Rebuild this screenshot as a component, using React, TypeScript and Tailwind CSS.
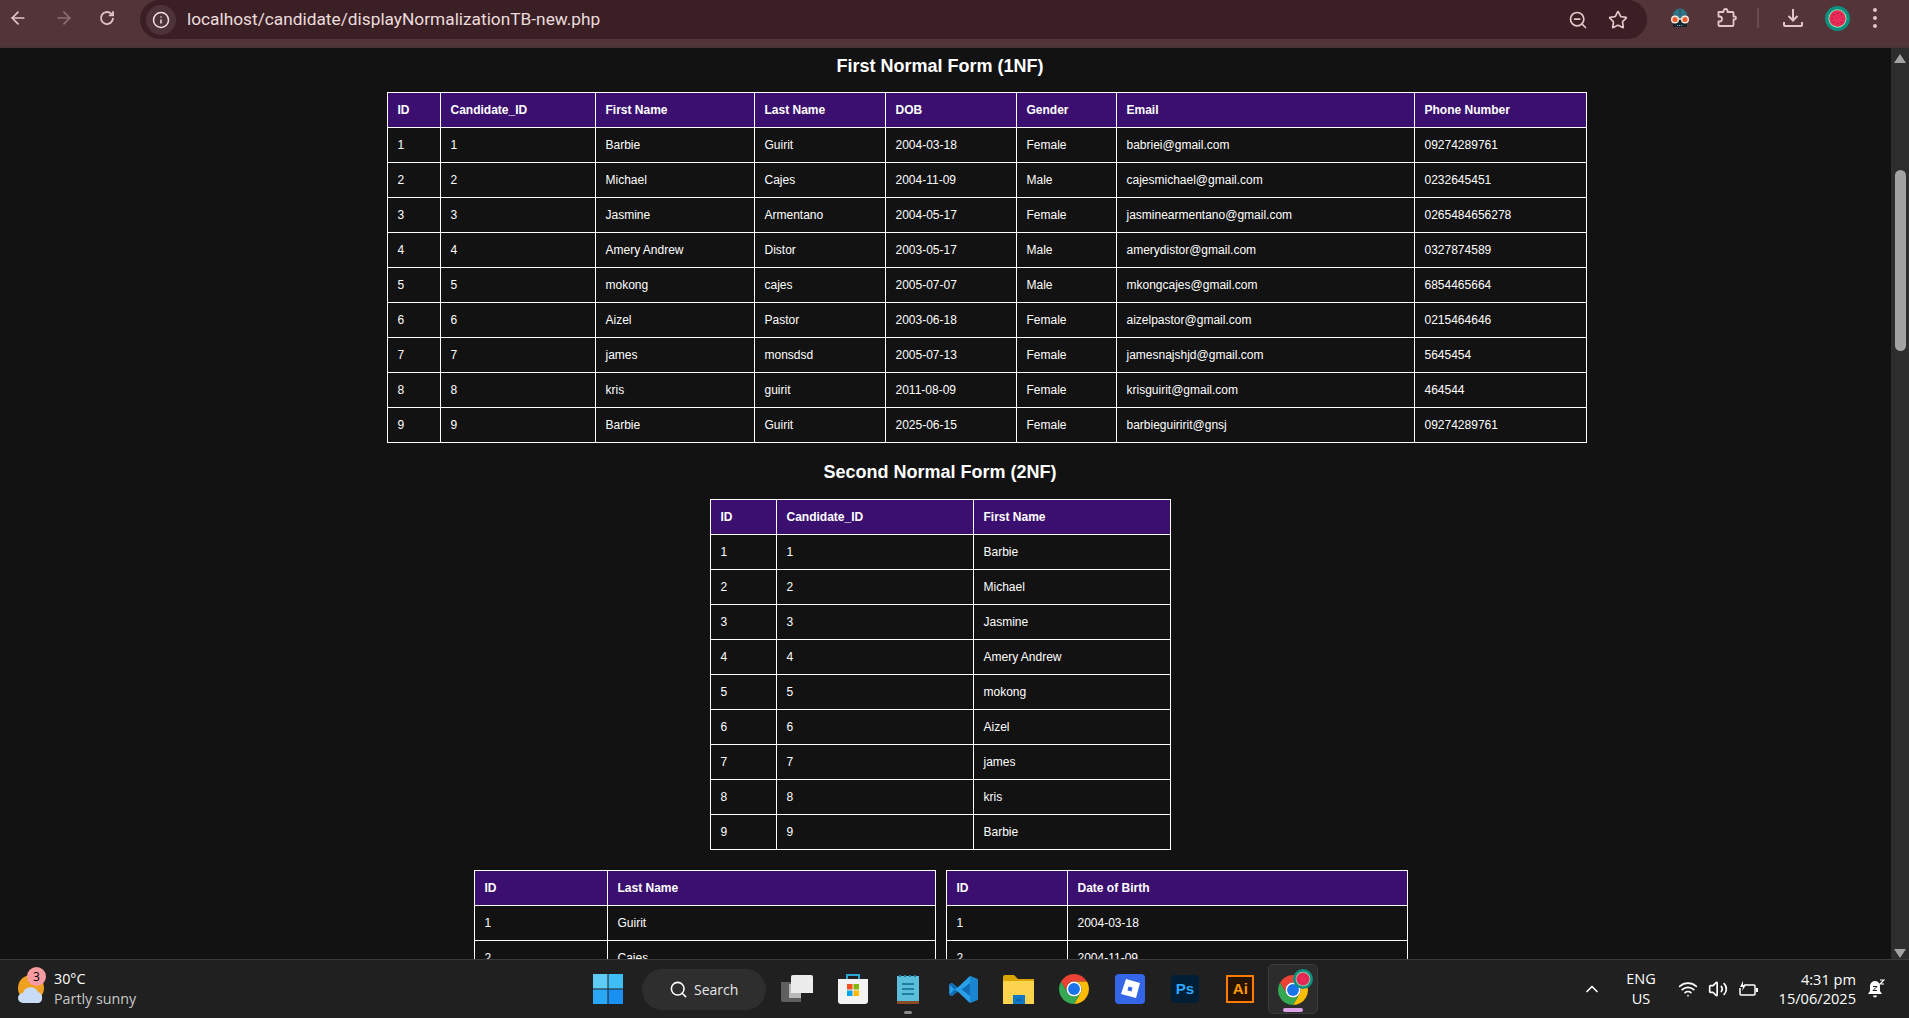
import { ArrowLeft, ArrowRight, ChevronUp, Info, Search, Star, Volume2, Wifi, ZoomOut } from "lucide-react";

type TableProps = {
  className: string;
  cols: string[];
  head: string[];
  rows: string[][];
};

const candidates = [
  ["1", "1", "Barbie", "Guirit", "2004-03-18", "Female", "babriei@gmail.com", "09274289761"],
  ["2", "2", "Michael", "Cajes", "2004-11-09", "Male", "cajesmichael@gmail.com", "0232645451"],
  ["3", "3", "Jasmine", "Armentano", "2004-05-17", "Female", "jasminearmentano@gmail.com", "0265484656278"],
  ["4", "4", "Amery Andrew", "Distor", "2003-05-17", "Male", "amerydistor@gmail.com", "0327874589"],
  ["5", "5", "mokong", "cajes", "2005-07-07", "Male", "mkongcajes@gmail.com", "6854465664"],
  ["6", "6", "Aizel", "Pastor", "2003-06-18", "Female", "aizelpastor@gmail.com", "0215464646"],
  ["7", "7", "james", "monsdsd", "2005-07-13", "Female", "jamesnajshjd@gmail.com", "5645454"],
  ["8", "8", "kris", "guirit", "2011-08-09", "Female", "krisguirit@gmail.com", "464544"],
  ["9", "9", "Barbie", "Guirit", "2025-06-15", "Female", "barbieguiririt@gnsj", "09274289761"],
];

const DataTable = ({ className, cols, head, rows }: TableProps) => (
  <table className={`table-fixed border-collapse text-xs text-white ${className}`}>
    <colgroup>
      {cols.map((col, i) => (
        <col key={i} className={col} />
      ))}
    </colgroup>
    <thead>
      <tr className="h-[35px] bg-[#3b0f70]">
        {head.map((label) => (
          <th key={label} className="border border-white px-[10px] text-left font-bold">
            {label}
          </th>
        ))}
      </tr>
    </thead>
    <tbody>
      {rows.map((row) => (
        <tr key={row[0]} className="h-[35px]">
          {row.map((cell, i) => (
            <td key={i} className="border border-white px-[10px]">
              {cell}
            </td>
          ))}
        </tr>
      ))}
    </tbody>
  </table>
);

const Chrome = ({ size }: { size: number }) => (
  <svg width={size} height={size} viewBox="0 0 48 48">
    <path fill="#ea4335" d="M24 12H44.78A24 24 0 0 0 3.22 12L13.6 30A12 12 0 0 1 24 12Z" />
    <path fill="#fbbc04" d="M24 12A12 12 0 0 1 34.4 30L24 48A24 24 0 0 0 44.78 12Z" />
    <path fill="#34a853" d="M34.4 30A12 12 0 0 1 13.6 30L3.22 12A24 24 0 0 0 24 48Z" />
    <circle cx="24" cy="24" r="12" fill="#fff" />
    <circle cx="24" cy="24" r="9.5" fill="#1a73e8" />
  </svg>
);

const Melon = ({ size }: { size: number }) => (
  <svg width={size} height={size} viewBox="0 0 26 26">
    <circle cx="13" cy="13" r="13" fill="#0b8f7e" />
    <circle cx="13" cy="13" r="9.5" fill="#8fe3b0" />
    <circle cx="13" cy="13" r="8.5" fill="#ea2a58" />
    <g fill="#7a1030">
      <circle cx="13" cy="7.5" r="0.6" />
      <circle cx="13" cy="18.5" r="0.6" />
      <circle cx="7.5" cy="13" r="0.6" />
      <circle cx="18.5" cy="13" r="0.6" />
      <circle cx="9" cy="9" r="0.6" />
      <circle cx="17" cy="9" r="0.6" />
      <circle cx="9" cy="17" r="0.6" />
      <circle cx="17" cy="17" r="0.6" />
    </g>
  </svg>
);

const Robot = () => (
  <svg width="20" height="20" viewBox="0 0 20 20">
    <path fill="#15242c" d="M3 9h14v10H3Z" />
    <path fill="#2f7386" d="M2.500 11C2.500 4 5.500 0.500 10 0.500S17.500 4 17.500 11Z" />
    <path stroke="#1d4f5e" strokeWidth="1" d="M10 1v6" />
    <circle cx="5" cy="11.500" r="3.300" fill="#ee5a2c" stroke="#f3ece4" strokeWidth="1.400" />
    <circle cx="15" cy="11.500" r="3.300" fill="#ee5a2c" stroke="#f3ece4" strokeWidth="1.400" />
    <path stroke="#f3ece4" strokeWidth="1.400" d="M8 11h4" />
    <path stroke="#6fc8d8" strokeWidth="1.200" strokeDasharray="1 1" d="M7 17.500h6" />
  </svg>
);

const TaskCell = ({ children }: { children: React.ReactNode }) => (
  <div className="relative flex h-[50px] w-[55.4px] shrink-0 items-center justify-center">{children}</div>
);

const Toolbar = () => (
  <div className="flex h-[48px] shrink-0 border-b-2 border-[#4b3439] bg-[#533539] text-[#e6c5ca]">
    <div className="flex h-[36px] w-[140px] items-center">
      <ArrowLeft className="ml-[8px] h-[20px] w-[20px]" />
      <ArrowRight className="ml-[26px] h-[20px] w-[20px] opacity-40" />
      <svg className="ml-[24px]" width="18" height="18" viewBox="0 0 24 24" fill="none" stroke="currentColor" strokeWidth="2.400">
        <path d="M20 12a8 8 0 1 1-2.400-5.700L20 8.500" />
        <path d="M20 3v5.500h-5.500" />
      </svg>
    </div>
    <div className="flex h-[39px] w-[1507px] items-center rounded-full bg-[#3a2024]">
      <div className="ml-[6px] flex h-[30px] w-[30px] items-center justify-center rounded-full bg-[#4d3338]">
        <Info className="h-[18px] w-[18px] text-[#f2dfe1]" />
      </div>
      <span className="ml-[11px] font-['Roboto',sans-serif] text-[17.3px] text-[#ecdcde]">
        localhost/candidate/displayNormalizationTB-new.php
      </span>
      <ZoomOut className="mr-[20px] ml-auto h-[20px] w-[20px]" />
      <Star className="mr-[19px] h-[20px] w-[20px]" />
    </div>
    <div className="flex h-[36px] flex-1 items-center">
      <div className="ml-[23px]">
        <Robot />
      </div>
      <svg className="ml-[27px]" width="20" height="20" viewBox="0 0 20 20" fill="none" stroke="currentColor" strokeWidth="1.800" strokeLinejoin="round">
        <path d="M1.500 4h5V3a2 2 0 0 1 4 0v1h5a1 1 0 0 1 1 1v3.500h1a1.500 1.500 0 0 1 0 3h-1V17a1 1 0 0 1-1 1H2.500a1 1 0 0 1-1-1v-3.500h1a2.500 2.500 0 0 0 0-5h-1Z" />
      </svg>
      <div className="ml-[20px] h-[20px] w-[2px] bg-[#6d4a50]" />
      <svg className="ml-[24px]" width="20" height="20" viewBox="0 0 20 20" fill="none" stroke="currentColor" strokeWidth="2">
        <path d="M10 1v11M5.500 8l4.500 4.500L14.500 8M1 14v3a1 1 0 0 0 1 1h16a1 1 0 0 0 1-1v-3" />
      </svg>
      <div className="ml-[22px]">
        <Melon size={25} />
      </div>
      <div className="ml-[23px] flex flex-col gap-[4px]">
        <div className="h-[4px] w-[4px] rounded-full bg-[#e6c5ca]" />
        <div className="h-[4px] w-[4px] rounded-full bg-[#e6c5ca]" />
        <div className="h-[4px] w-[4px] rounded-full bg-[#e6c5ca]" />
      </div>
    </div>
  </div>
);

const Scrollbar = () => (
  <div className="flex w-[18px] shrink-0 flex-col items-center bg-[#2d2d2d]">
    <div className="mt-[6px] h-0 w-0 border-x-[6px] border-b-[9px] border-x-transparent border-b-[#a3a3a3]" />
    <div className="mt-[107px] h-[181px] w-[11px] rounded-full bg-[#a3a3a3]" />
    <div className="mt-auto mb-[1px] h-0 w-0 border-x-[6px] border-t-[9px] border-x-transparent border-t-[#a3a3a3]" />
  </div>
);

const Taskbar = () => (
  <div className="flex h-[59px] shrink-0 items-center border-t border-[#3c3c3c] bg-[#202020] font-['Open_Sans',sans-serif] text-white">
    <div className="flex w-[580px] shrink-0 items-center">
      <div className="relative ml-[16px] h-[32px] w-[32px]">
        <svg width="30" height="34" viewBox="0 0 30 34">
          <circle cx="15" cy="15" r="13" fill="#f0a020" />
          <path fill="#c9dcf5" d="M7 30a5 5 0 0 1 0-10 8 8 0 0 1 15-1 6 6 0 0 1 1 11Z" />
        </svg>
        <span className="absolute -top-[6px] left-[11px] flex h-[19px] w-[19px] items-center justify-center rounded-full bg-[#f99ca2] text-[12px] text-black">
          3
        </span>
      </div>
      <div className="ml-[6px] text-[14.3px] leading-[20px]">
        <div>30°C</div>
        <div className="text-[#c8c8c8]">Partly sunny</div>
      </div>
    </div>
    <div className="flex w-[56px] justify-center">
      <svg width="30" height="30" viewBox="0 0 30 30">
        <path fill="#5fcbf7" d="M0 0h14.500v14.500H0z" />
        <path fill="#3fbdf7" d="M15.500 0H30v14.500H15.500z" />
        <path fill="#2aa8f5" d="M0 15.500h14.500V30H0z" />
        <path fill="#1a90f2" d="M15.500 15.500H30V30H15.500z" />
      </svg>
    </div>
    <div className="ml-[6px] flex h-[41px] w-[124px] items-center rounded-full bg-[#2e2e2e]">
      <Search className="ml-[27px] h-[19px] w-[19px]" />
      <span className="ml-[6px] text-[14px] text-[#e6e6e6]">Search</span>
    </div>
    <div className="ml-[3.500px] flex">
      <TaskCell>
        <svg width="32" height="30" viewBox="0 0 32 30">
          <path fill="#5f5f5f" d="M0 8h20v20H2a2 2 0 0 1-2-2Z" />
          <path fill="#b8b8b8" d="M8 10h12v14H8Z" />
          <path fill="#ececec" d="M10 3a2 2 0 0 1 2-2h18a2 2 0 0 1 2 2v16H10Z" />
        </svg>
      </TaskCell>
      <TaskCell>
        <svg width="30" height="32" viewBox="0 0 30 32">
          <path fill="none" stroke="#2aa8d8" strokeWidth="2" d="M9 6V2h12v4" />
          <path fill="#f3f3f3" d="M0 6h30v22a3 3 0 0 1-3 3H3a3 3 0 0 1-3-3Z" />
          <path fill="#f25022" d="M9 11h5.500v5.500H9z" />
          <path fill="#7fba00" d="M15.500 11H21v5.500h-5.500z" />
          <path fill="#00a4ef" d="M9 17.500h5.500V23H9z" />
          <path fill="#ffb900" d="M15.500 17.500H21V23h-5.500z" />
        </svg>
      </TaskCell>
      <TaskCell>
        <svg width="22" height="31" viewBox="0 0 22 31">
          <path fill="#5bbfdc" d="M0 2h22v26H0Z" />
          <path fill="#8a4a24" d="M0 27h22v3H0Z" />
          <path stroke="#1d7ea0" strokeWidth="2" d="M5 10h12M5 15h12M5 20h12" />
          <path stroke="#1d7ea0" strokeWidth="2" strokeDasharray="2 3" d="M2 2h18" />
        </svg>
        <div className="absolute bottom-0 h-[3px] w-[8px] rounded-full bg-[#8a8a8a]" />
      </TaskCell>
      <TaskCell>
        <svg width="31" height="31" viewBox="0 0 24 24">
          <path fill="#2aa0e8" d="M17 1.500 23 4v16l-6 2.500L7.500 13.500 3 17l-2-1V8l2-1 4.500 3.500Z" />
          <path fill="#0f6db8" d="M17 7 10.500 12 17 17Z" />
          <path fill="#0f6db8" d="M1 8l2-1 4.500 3.500-2.500 1.500ZM1 16l2 1 4.500-3.500L5 12Z" />
          <path fill="#1a85d0" d="M17 1.500 23 4v16l-6 2.500Z" />
        </svg>
      </TaskCell>
      <TaskCell>
        <svg width="31" height="29" viewBox="0 0 31 29">
          <path fill="#d9a404" d="M0 2a2 2 0 0 1 2-2h9l4 4h16v8H0Z" />
          <path fill="#fbd34c" d="M0 6h31v23H0Z" />
          <path fill="#0f78c8" d="M10 20h12v9H10Z" />
          <path stroke="#0a4f8a" d="M13 25h6" />
        </svg>
      </TaskCell>
      <TaskCell>
        <Chrome size={30} />
      </TaskCell>
      <TaskCell>
        <svg width="30" height="30" viewBox="0 0 30 30">
          <rect width="30" height="30" rx="4" fill="#3566e8" />
          <path fill="#fff" d="M11 5 25 9 21 24 6 20Z" />
          <path fill="#3566e8" d="M13.500 12.500 17.500 13.500 16.500 17.500 12.500 16.500Z" />
        </svg>
      </TaskCell>
      <TaskCell>
        <div className="flex h-[28px] w-[28px] items-center justify-center rounded-[4px] bg-[#001e36] font-['Liberation_Sans',sans-serif] text-[15px] font-bold text-[#31a8ff]">
          Ps
        </div>
      </TaskCell>
      <TaskCell>
        <div className="flex h-[28px] w-[28px] items-center justify-center border-2 border-[#ff7c00] bg-[#261300] font-['Liberation_Sans',sans-serif] text-[15px] font-bold text-[#ff9a00]">
          Ai
        </div>
      </TaskCell>
      <div className="relative flex h-[50px] w-[50px] shrink-0 flex-col items-center rounded-[5px] border border-[#3a3a3a] bg-[#2c2c2c]">
        <div className="mt-[10px]">
          <Chrome size={30} />
        </div>
        <div className="absolute top-[4px] right-[4px]">
          <Melon size={20} />
        </div>
        <div className="mt-auto mb-[1px] h-[4px] w-[20px] rounded-full bg-[#dca4e6]" />
      </div>
    </div>
    <div className="ml-[264px] flex items-center">
      <ChevronUp className="h-[20px] w-[20px]" />
      <div className="ml-[22px] w-[34px] text-center text-[14.500px] leading-[20px]">
        <div>ENG</div>
        <div>US</div>
      </div>
      <Wifi className="ml-[20px] h-[20px] w-[20px]" />
      <Volume2 className="ml-[10px] h-[20px] w-[20px]" />
      <svg className="ml-[10px]" width="20" height="20" viewBox="0 0 20 20" fill="none" stroke="currentColor" strokeWidth="1.500">
        <path d="M6 6h10a1 1 0 0 1 1 1v8a1 1 0 0 1-1 1H3a1 1 0 0 1-1-1V9" />
        <path fill="currentColor" stroke="none" d="M18 9h2v4h-2ZM5 2 2 8h3l-1 4 4-6H5Z" />
      </svg>
      <div className="ml-[18px] w-[80px] text-right text-[14.600px] leading-[19px]">
        <div>4:31 pm</div>
        <div>15/06/2025</div>
      </div>
      <svg className="ml-[11px]" width="18" height="20" viewBox="0 0 18 20" fill="#fff">
        <path d="M8 2a5 5 0 0 0-5 5v5l-2 3h14l-2-3V7a5 5 0 0 0-5-5ZM6 16.500a2 2 0 0 0 4 0Z" />
        <path stroke="#202020" strokeWidth="1" fill="none" d="M6 7.500h4l-4 4h4" />
        <path stroke="#fff" strokeWidth="1.200" fill="none" d="M13 1h4l-4 4h4" />
      </svg>
    </div>
  </div>
);

export default function App() {
  return (
    <div className="flex h-screen flex-col overflow-hidden bg-[#121212] font-['Liberation_Sans',sans-serif]">
      <Toolbar />
      <div className="flex min-h-0 flex-1">
        <div className="min-w-0 flex-1 overflow-hidden">
          <div className="flex w-[1880px] flex-col items-center">
            <h2 className="mt-[8px] mb-[16px] h-[20px] text-[18px] leading-[20px] font-bold text-white">
              First Normal Form (1NF)
            </h2>
            <DataTable
              className="ml-[93px] w-[1199px]"
              cols={["w-[53px]", "w-[155px]", "w-[159px]", "w-[131px]", "w-[131px]", "w-[100px]", "w-[298px]", "w-[172px]"]}
              head={["ID", "Candidate_ID", "First Name", "Last Name", "DOB", "Gender", "Email", "Phone Number"]}
              rows={candidates}
            />
            <h2 className="mt-[19px] mb-[17px] h-[20px] text-[18px] leading-[20px] font-bold text-white">
              Second Normal Form (2NF)
            </h2>
            <DataTable
              className="w-[460px]"
              cols={["w-[66px]", "w-[197px]", "w-[197px]"]}
              head={["ID", "Candidate_ID", "First Name"]}
              rows={candidates.map((row) => [row[0], row[1], row[2]])}
            />
            <div className="mt-[20px] ml-[1px] flex gap-[10px]">
              <DataTable
                className="w-[461px]"
                cols={["w-[133px]", "w-[328px]"]}
                head={["ID", "Last Name"]}
                rows={candidates.slice(0, 2).map((row) => [row[0], row[3]])}
              />
              <DataTable
                className="w-[461px]"
                cols={["w-[121px]", "w-[340px]"]}
                head={["ID", "Date of Birth"]}
                rows={candidates.slice(0, 2).map((row) => [row[0], row[4]])}
              />
            </div>
          </div>
        </div>
        <Scrollbar />
      </div>
      <Taskbar />
    </div>
  );
}
